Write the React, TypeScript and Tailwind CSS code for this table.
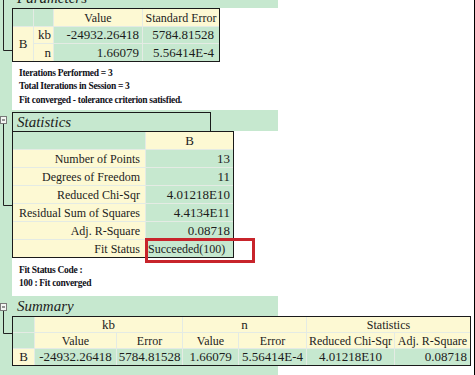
import React from "react";

const G = "bg-[#c6e8cf]";
const Y = "bg-[#fdf9d3]";
const L = "border-[#e4ebe4]";
const N = "text-[13px]";

function C({ className = "", children }: { className?: string; children?: React.ReactNode }) {
  return (
    <div className={`flex items-center overflow-visible whitespace-nowrap ${L} ${className}`}>{children}</div>
  );
}

function Gutter() {
  return (
    <div className={`w-[12px] shrink-0 ${G}`}>
      <svg width="12" height="375" viewBox="0 0 12 375">
        <path d="M3.5 0 V50.5 H12" fill="none" stroke="#222" strokeWidth="1" />
        <rect x="0.5" y="116.5" width="6" height="7" fill="#f4f7f4" stroke="#7a7a7a" />
        <path d="M2 120 H5" stroke="#333" />
        <path d="M3.5 124 V205.5 H12" fill="none" stroke="#222" strokeWidth="1" />
        <rect x="0.5" y="303.5" width="6" height="7" fill="#f4f7f4" stroke="#7a7a7a" />
        <path d="M2 307 H5" stroke="#333" />
        <path d="M3.5 311 V333.5 H12" fill="none" stroke="#222" strokeWidth="1" />
      </svg>
    </div>
  );
}

export default function App() {
  return (
    <div className="flex h-[375px] w-[475px] overflow-hidden border-r border-black bg-white font-['Liberation_Serif',serif] text-[#1c1c1c]">
      <Gutter />
      <div className="flex min-w-0 flex-1 flex-col">
        {/* Parameters header, mostly scrolled away */}
        <div className={`-mt-[13px] h-[21px] w-[266px] shrink-0 ${G}`}>
          <div className="pl-[5px] pt-[2px] text-[15px] italic leading-[19px]">Parameters</div>
        </div>

        {/* Parameters table */}
        <div className="grid w-[208px] shrink-0 grid-cols-[21px_20px_89px_76px] grid-rows-[18px_17px_17px] border border-[#1a1a1a] text-[12px]">
          <C className={`${G} border-r border-b`} />
          <C className={`${G} border-r border-b`} />
          <C className={`${Y} justify-center border-r border-b`}>Value</C>
          <C className={`${Y} justify-center border-b`}>Standard Error</C>
          <C className={`${Y} ${N} row-span-2 justify-center border-r`}>B</C>
          <C className={`${Y} ${N} justify-end pr-[2px] border-r border-b`}>kb</C>
          <C className={`${G} ${N} justify-end pr-[3px] border-r border-b`}>-24932.26418</C>
          <C className={`${G} ${N} justify-end pr-[5px] border-b`}>5784.81528</C>
          <C className={`${Y} ${N} justify-end pr-[2px] border-r`}>n</C>
          <C className={`${G} ${N} justify-end pr-[3px] border-r`}>1.66079</C>
          <C className={`${G} ${N} justify-end pr-[5px]`}>5.56414E-4</C>
        </div>

        {/* Notes */}
        <div className="h-[48px] shrink-0 bg-white pl-[7px] pt-[5px] text-[9.5px] font-bold leading-[13.3px] tracking-[-0.3px] text-[#101018]">
          <div>Iterations Performed = 3</div>
          <div>Total Iterations in Session = 3</div>
          <div>Fit converged - tolerance criterion satisfied.</div>
        </div>

        {/* Statistics header */}
        <div className={`h-[21px] w-[266px] shrink-0 pt-[2px] ${G}`}>
          <div className="h-[19px] w-[199px] border-x border-t border-[#1a1a1a] pl-[4px] text-[15px] italic leading-[18px]">
            Statistics
          </div>
        </div>

        {/* Statistics table */}
        <div className="grid w-[222px] shrink-0 grid-cols-[133px_87px] grid-rows-[18px_18px_18px_18px_18px_18px_17px] border border-[#1a1a1a] text-[12px]">
          <C className={`${G} border-r border-b`} />
          <C className={`${Y} ${N} justify-center border-b`}>B</C>
          <C className={`${Y} justify-end pr-[5px] border-r border-b`}>Number of Points</C>
          <C className={`${G} ${N} justify-end pr-[3px] border-b`}>13</C>
          <C className={`${Y} justify-end pr-[5px] border-r border-b`}>Degrees of Freedom</C>
          <C className={`${G} ${N} justify-end pr-[3px] border-b`}>11</C>
          <C className={`${Y} justify-end pr-[5px] border-r border-b`}>Reduced Chi-Sqr</C>
          <C className={`${G} ${N} justify-end pr-[3px] border-b`}>4.01218E10</C>
          <C className={`${Y} justify-end pr-[5px] border-r border-b`}>Residual Sum of Squares</C>
          <C className={`${G} ${N} justify-end pr-[3px] border-b`}>4.4134E11</C>
          <C className={`${Y} justify-end pr-[5px] border-r border-b`}>Adj. R-Square</C>
          <C className={`${G} ${N} justify-end pr-[3px] border-b`}>0.08718</C>
          <C className={`${Y} justify-end pr-[5px] border-r`}>Fit Status</C>
          <C className={`${G} relative justify-start pl-[2px]`}>
            Succeeded(100)
            <div className="pointer-events-none absolute -left-[1px] -top-[2px] h-[25px] w-[110px] border-[3px] border-[#c8242b]" />
          </C>
        </div>

        {/* Fit status notes */}
        <div className="h-[38px] shrink-0 bg-white pl-[7px] pt-[6px] text-[9.5px] font-bold leading-[13px] tracking-[-0.3px] text-[#101018]">
          <div>Fit Status Code :</div>
          <div>100 : Fit converged</div>
        </div>

        {/* Summary header */}
        <div className={`h-[20px] w-[266px] shrink-0 ${G}`}>
          <div className="pl-[5px] pt-[1px] text-[15px] italic leading-[18px]">Summary</div>
        </div>

        {/* Summary table */}
        <div className="grid w-[459px] shrink-0 grid-cols-[22px_82px_66px_56px_68px_88px_75px] grid-rows-[16px_16px_16px] border border-[#1a1a1a] text-[12px]">
          <C className={`${G} border-r border-b`} />
          <C className={`${Y} ${N} col-span-2 justify-center border-r border-b`}>kb</C>
          <C className={`${Y} ${N} col-span-2 justify-center border-r border-b`}>n</C>
          <C className={`${Y} col-span-2 justify-center border-b`}>Statistics</C>
          <C className={`${G} border-r border-b`} />
          <C className={`${Y} justify-center border-r border-b`}>Value</C>
          <C className={`${Y} justify-center border-r border-b`}>Error</C>
          <C className={`${Y} justify-center border-r border-b`}>Value</C>
          <C className={`${Y} justify-center border-r border-b`}>Error</C>
          <C className={`${Y} justify-center border-r border-b`}>Reduced Chi-Sqr</C>
          <C className={`${Y} justify-center border-b`}>Adj. R-Square</C>
          <C className={`${Y} ${N} justify-center border-r`}>B</C>
          <C className={`${G} ${N} justify-center border-r`}>-24932.26418</C>
          <C className={`${G} ${N} justify-center border-r`}>5784.81528</C>
          <C className={`${G} ${N} justify-center border-r`}>1.66079</C>
          <C className={`${G} ${N} justify-center border-r`}>5.56414E-4</C>
          <C className={`${G} ${N} justify-center border-r`}>4.01218E10</C>
          <C className={`${G} ${N} justify-end pr-[3px]`}>0.08718</C>
        </div>

        {/* next section band */}
        <div className={`h-[20px] w-[266px] shrink-0 ${G}`} />
      </div>
    </div>
  );
}
